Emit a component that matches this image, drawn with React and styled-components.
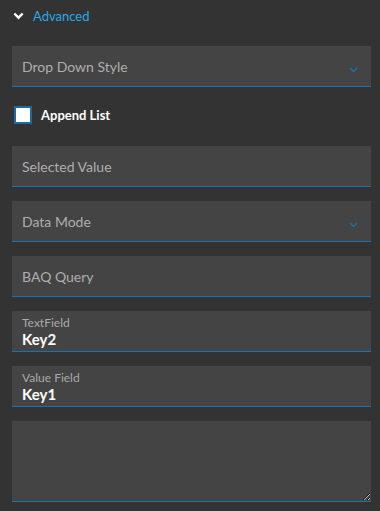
import React from "react";
import styled, { createGlobalStyle } from "styled-components";

const Global = createGlobalStyle`
  html, body { margin: 0; padding: 0; background: #333333; }
  body { font-family: Lato, "Liberation Sans", sans-serif; }
  * { box-sizing: border-box; }
`;

const Panel = styled.div`
  width: 380px;
  min-height: 511px;
  background: #333333;
  padding: 0 9px 0 12px;
  display: flex;
  flex-direction: column;
`;

const Header = styled.div`
  height: 32px;
  display: flex;
  align-items: center;
  gap: 9px;
  padding-left: 1px;
  color: #29a9e6;
  font-size: 13px;
`;

const Stack = styled.div`
  margin-top: 14px;
  display: flex;
  flex-direction: column;
  gap: 14px;
`;

const Field = styled.div`
  height: 41px;
  background: #444444;
  border-bottom: 1px solid #1b72ad;
  display: flex;
  flex-direction: column;
  justify-content: ${(p) => (p.$labeled ? "flex-start" : "center")};
  padding: ${(p) => (p.$labeled ? "5px 10px 0" : "2px 10px 0")};
  position: relative;
`;

const Placeholder = styled.div`
  color: #aeaeae;
  font-size: 14px;
  line-height: 18px;
`;

const SmallLabel = styled.div`
  color: #aaaaaa;
  font-size: 12px;
  line-height: 14px;
`;

const Value = styled.div`
  color: #ffffff;
  font-size: 15px;
  font-weight: 700;
  line-height: 18px;
`;

const Caret = styled.svg`
  position: absolute;
  right: 13px;
  top: 21px;
`;

const CheckRow = styled.label`
  display: flex;
  align-items: center;
  gap: 9px;
  padding: 5px 0 8px 2px;
  color: #ffffff;
  font-size: 13px;
  font-weight: 700;
`;

const Box = styled.span`
  width: 18px;
  height: 18px;
  background: #ffffff;
  border: 2px solid #1a6aa3;
  display: inline-block;
`;

const TextArea = styled.textarea`
  height: 81px;
  width: 100%;
  background: #444444;
  border: none;
  border-bottom: 1px solid #1b72ad;
  resize: vertical;
  outline: none;
  color: #fff;
  padding: 8px 10px;
  font-family: inherit;
  display: block;
`;

const DropCaret = () => (
  <Caret width="9" height="6" viewBox="0 0 9 6">
    <path d="M1 1 L4.5 4.5 L8 1" fill="none" stroke="#1f6ea8" strokeWidth="1.4" />
  </Caret>
);

export default function App() {
  return (
    <>
      <Global />
      <Panel>
        <Header>
          <svg width="11" height="8" viewBox="0 0 11 8">
            <path d="M1.3 1.5 L5.5 5.7 L9.7 1.5" fill="none" stroke="#ffffff" strokeWidth="2.4" />
          </svg>
          <span>Advanced</span>
        </Header>
        <Stack>
          <Field>
            <Placeholder>Drop Down Style</Placeholder>
            <DropCaret />
          </Field>
          <CheckRow>
            <Box />
            Append List
          </CheckRow>
          <Field>
            <Placeholder>Selected Value</Placeholder>
          </Field>
          <Field>
            <Placeholder>Data Mode</Placeholder>
            <DropCaret />
          </Field>
          <Field>
            <Placeholder>BAQ Query</Placeholder>
          </Field>
          <Field $labeled>
            <SmallLabel>TextField</SmallLabel>
            <Value>Key2</Value>
          </Field>
          <Field $labeled>
            <SmallLabel>Value Field</SmallLabel>
            <Value>Key1</Value>
          </Field>
          <TextArea />
        </Stack>
      </Panel>
    </>
  );
}
